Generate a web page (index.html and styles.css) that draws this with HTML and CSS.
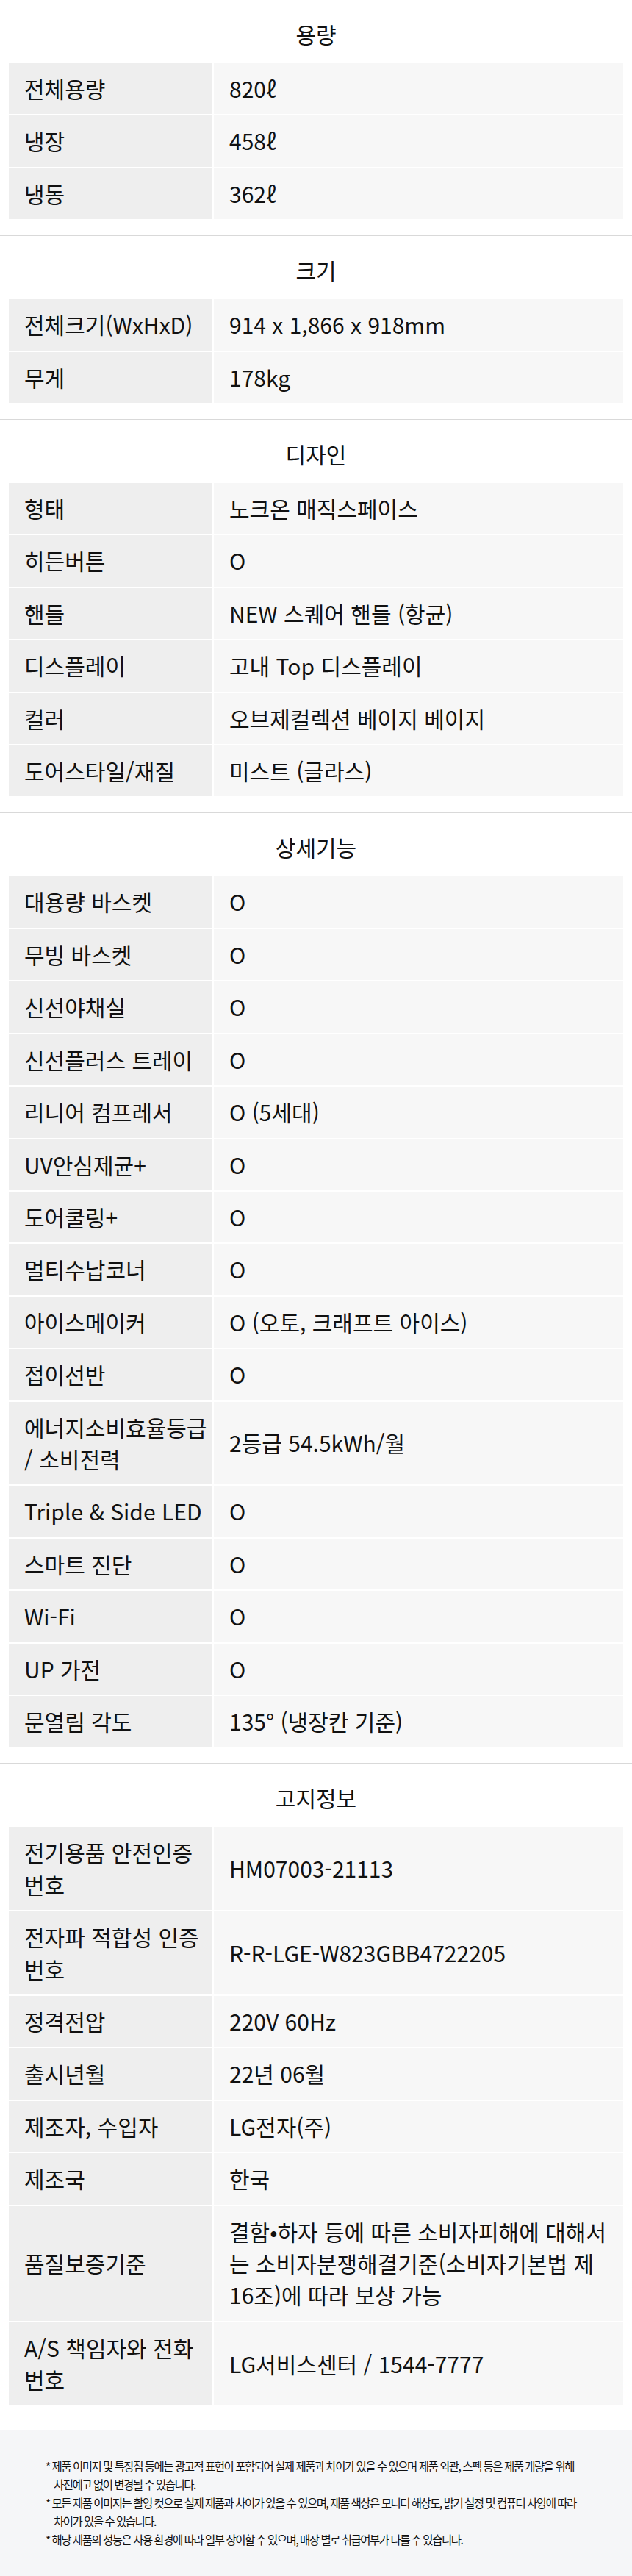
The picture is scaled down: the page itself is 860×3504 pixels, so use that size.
FILE: index.html
```html
<!DOCTYPE html>
<html lang="ko">
<head>
    <meta charset="UTF-8">
    <meta name="viewport" content="width=device-width, initial-scale=1.0">
    <title>제품 스펙</title>
    <link rel="stylesheet" href="styles.css">
</head>
<body>
    <div class="spec">
        <div class="spec-group">
            <h3>용량</h3>
            <table>
                <tr><th>전체용량</th><td>820ℓ</td></tr>
                <tr><th>냉장</th><td>458ℓ</td></tr>
                <tr><th>냉동</th><td>362ℓ</td></tr>
            </table>
        </div>

        <div class="spec-group">
            <h3>크기</h3>
            <table>
                <tr><th>전체크기(WxHxD)</th><td>914 x 1,866 x 918mm</td></tr>
                <tr><th>무게</th><td>178kg</td></tr>
            </table>
        </div>

        <div class="spec-group">
            <h3>디자인</h3>
            <table>
                <tr><th>형태</th><td>노크온 매직스페이스</td></tr>
                <tr><th>히든버튼</th><td>O</td></tr>
                <tr><th>핸들</th><td>NEW 스퀘어 핸들 (항균)</td></tr>
                <tr><th>디스플레이</th><td>고내 Top 디스플레이</td></tr>
                <tr><th>컬러</th><td>오브제컬렉션 베이지 베이지</td></tr>
                <tr><th>도어스타일/재질</th><td>미스트 (글라스)</td></tr>
            </table>
        </div>

        <div class="spec-group">
            <h3>상세기능</h3>
            <table>
                <tr><th>대용량 바스켓</th><td>O</td></tr>
                <tr><th>무빙 바스켓</th><td>O</td></tr>
                <tr><th>신선야채실</th><td>O</td></tr>
                <tr><th>신선플러스 트레이</th><td>O</td></tr>
                <tr><th>리니어 컴프레서</th><td>O (5세대)</td></tr>
                <tr><th>UV안심제균+</th><td>O</td></tr>
                <tr><th>도어쿨링+</th><td>O</td></tr>
                <tr><th>멀티수납코너</th><td>O</td></tr>
                <tr><th>아이스메이커</th><td>O (오토, 크래프트 아이스)</td></tr>
                <tr><th>접이선반</th><td>O</td></tr>
                <tr><th>에너지소비효율등급 / 소비전력</th><td>2등급 54.5kWh/월</td></tr>
                <tr><th>Triple &amp; Side LED</th><td>O</td></tr>
                <tr><th>스마트 진단</th><td>O</td></tr>
                <tr><th>Wi-Fi</th><td>O</td></tr>
                <tr><th>UP 가전</th><td>O</td></tr>
                <tr><th>문열림 각도</th><td>135° (냉장칸 기준)</td></tr>
            </table>
        </div>

        <div class="spec-group">
            <h3>고지정보</h3>
            <table>
                <tr><th>전기용품 안전인증 번호</th><td>HM07003-21113</td></tr>
                <tr><th>전자파 적합성 인증 번호</th><td>R-R-LGE-W823GBB4722205</td></tr>
                <tr><th>정격전압</th><td>220V 60Hz</td></tr>
                <tr><th>출시년월</th><td>22년 06월</td></tr>
                <tr><th>제조자, 수입자</th><td>LG전자(주)</td></tr>
                <tr><th>제조국</th><td>한국</td></tr>
                <tr><th>품질보증기준</th><td>결함•하자 등에 따른 소비자피해에 대해서는 소비자분쟁해결기준(소비자기본법 제16조)에 따라 보상 가능</td></tr>
                <tr><th>A/S 책임자와 전화 번호</th><td>LG서비스센터 / 1544-7777</td></tr>
            </table>
        </div>
    </div>

    <div class="notice">
        <p>* 제품 이미지 및 특장점 등에는 광고적 표현이 포함되어 실제 제품과 차이가 있을 수 있으며 제품 외관, 스펙 등은 제품 개량을 위해 사전예고 없이 변경될 수 있습니다.</p>
        <p>* 모든 제품 이미지는 촬영 컷으로 실제 제품과 차이가 있을 수 있으며, 제품 색상은 모니터 해상도, 밝기 설정 및 컴퓨터 사양에 따라 차이가 있을 수 있습니다.</p>
        <p>* 해당 제품의 성능은 사용 환경에 따라 일부 상이할 수 있으며, 매장 별로 취급여부가 다를 수 있습니다.</p>
    </div>
</body>
</html>
```

FILE: styles.css
```css
* {
    margin: 0;
    padding: 0;
    box-sizing: border-box;
}
body {
    font-family: 'Noto Sans CJK KR', 'Noto Sans', sans-serif;
    background-color: #fff;
    color: #111;
}
.spec-group {
    padding: 0 10px 20px;
    border-bottom: 1px solid #d9d9d9;
}
.spec-group h3 {
    height: 84px;
    padding-top: 8px;
    line-height: 76px;
    font-size: 30px;
    font-weight: normal;
    text-align: center;
    color: #111;
}
.spec-group table {
    width: 100%;
    border-spacing: 2px;
}
.spec-group th,
.spec-group td {
    padding: 13px 20px 13px 21px;
    font-size: 30px;
    line-height: 43.4px;
    font-weight: normal;
    text-align: left;
    vertical-align: middle;
}
.spec-group th {
    width: 277px;
    padding-right: 4px;
    background-color: #eeeeee;
    word-break: keep-all;
}
.spec-group td {
    background-color: #f7f7f7;
}
.notice {
    margin-top: 10px;
    padding: 37px 62px 38px;
    background-color: #f5f6f8;
}
.notice p {
    padding-left: 11px;
    text-indent: -11px;
    font-size: 15.5px;
    line-height: 25px;
    letter-spacing: -1.5px;
    word-break: keep-all;
    color: #111;
}
```
